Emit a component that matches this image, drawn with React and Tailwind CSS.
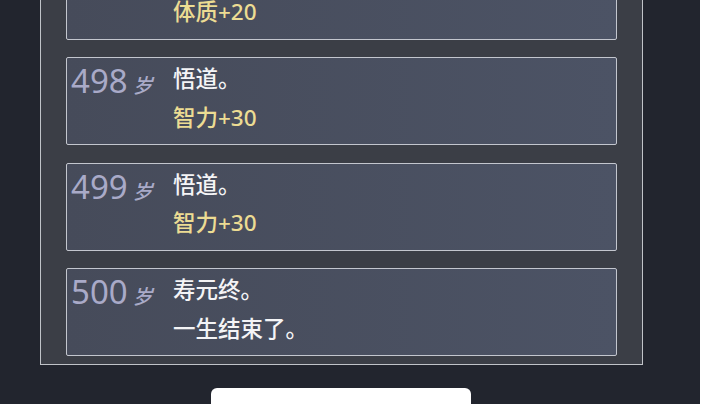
import React from "react";

const font = { fontFamily: '"Noto Sans", "Noto Sans CJK SC", sans-serif' };

const events = [
  { age: 497, lines: [{ t: "修炼有成。", y: false }, { t: "体质+20", y: true }] },
  { age: 498, lines: [{ t: "悟道。", y: false }, { t: "智力+30", y: true }] },
  { age: 499, lines: [{ t: "悟道。", y: false }, { t: "智力+30", y: true }] },
  { age: 500, lines: [{ t: "寿元终。", y: false }, { t: "一生结束了。", y: false }] },
];

function Card({ age, lines }) {
  return (
    <div className="flex h-[88px] rounded-[2px] border border-[#c3c6ce] bg-gradient-to-r from-[#464b5a] to-[#4c5365] pl-[4px]">
      <div className="w-[102px] shrink-0 text-[33px] leading-[45px] text-[#a9aac8]">
        {age}
        <span className="ml-[5px] text-[20px] leading-none font-medium italic text-[#a9aac8]">岁</span>
      </div>
      <div className="flex flex-col pt-[2px] text-[22.5px] leading-[38.5px] font-medium">
        {lines.map((l, i) => (
          <div key={i} className={l.y ? "text-[#ecdc93]" : "text-[#f4f4f6]"}>
            {l.t}
          </div>
        ))}
      </div>
    </div>
  );
}

export default function App() {
  return (
    <div className="flex h-[404px] w-[720px] overflow-hidden bg-white" style={font}>
      <div className="flex w-[700px] shrink-0 flex-col bg-[#22252e] pl-[40px]">
        <div className="-mt-[59px] flex w-[603px] flex-col gap-[17.5px] border border-[#c0c3c8] bg-[#3b3e46] px-[25px] pt-[9.5px] pb-[8px]">
          {events.map((e) => (
            <Card key={e.age} {...e} />
          ))}
        </div>
        <button className="ml-[171px] mt-[23px] h-[56px] w-[260px] shrink-0 rounded-[6px] bg-white pt-[20px] text-[20px] leading-[28px] text-[#333]">
          再次人生
        </button>
      </div>
    </div>
  );
}
